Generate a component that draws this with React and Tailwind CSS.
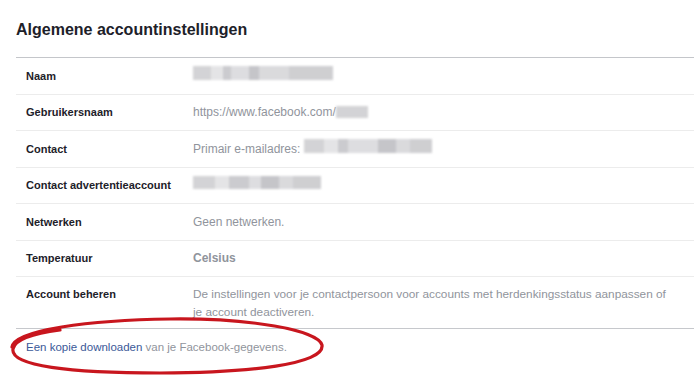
import React from "react";

const ROWS = [
  { label: "Naam", value: <Blur widths={[18, 12, 8, 18, 10, 30, 44]} h={14} /> },
  {
    label: "Gebruikersnaam",
    value: (
      <span className="flex items-center">
        https://www.facebook.com/
        <Blur widths={[32]} h={12} />
      </span>
    ),
  },
  {
    label: "Contact",
    value: (
      <span className="flex items-center">
        Primair e-mailadres:
        <span className="ml-[4px]">
          <Blur widths={[20, 14, 10, 30, 18, 14, 22]} h={14} />
        </span>
      </span>
    ),
  },
  { label: "Contact advertentieaccount", value: <Blur widths={[22, 14, 20, 12, 18, 14, 28]} h={13} /> },
  { label: "Netwerken", value: "Geen netwerken." },
  { label: "Temperatuur", value: <span className="font-bold">Celsius</span> },
];

const SHADES = ["#cfcfd2", "#e2e2e4", "#c6c6ca", "#dadadd", "#bfbfc4", "#d6d6d9", "#cacacd"];

// pixelated privacy blur over the hidden values
function Blur({ widths, h }) {
  return (
    <span className="inline-flex blur-[1.2px] opacity-90" style={{ height: h }}>
      {widths.map((w, i) => (
        <span key={i} className="block h-full" style={{ width: w, background: SHADES[i % SHADES.length] }} />
      ))}
    </span>
  );
}

export default function App() {
  return (
    <div className="relative w-[694px] h-[377px] bg-white overflow-hidden font-['Liberation_Sans',Arial,sans-serif]">
      <h1 className="pl-4 pt-[20px] text-[16px] leading-[20px] font-bold text-[#1d2129]">
        Algemene accountinstellingen
      </h1>

      <div className="ml-4 mt-[17px] border-t border-[#c4c6ca]">
        {ROWS.map(row => (
          <div key={row.label} className="flex items-center h-[36.5px] border-b border-[#ececec]">
            <div className="w-[177px] pl-[10px] shrink-0 text-[11px] font-bold text-[#1d2129]">{row.label}</div>
            <div className="text-[12px] text-[#90949c]">{row.value}</div>
          </div>
        ))}

        {/* Account beheren */}
        <div className="flex items-start pt-[8px] pb-[7px] leading-[18px]">
          <div className="w-[177px] pl-[10px] shrink-0 text-[11px] font-bold text-[#1d2129]">Account beheren</div>
          <div className="text-[11.8px] text-[#90949c]">
            De instellingen voor je contactpersoon voor accounts met herdenkingsstatus aanpassen of
            <br />
            je account deactiveren.
          </div>
        </div>

        <div className="border-t border-[#c6c8cc] pt-[9px] pl-[10px] text-[11.5px] leading-[18px] text-[#90949c]">
          <a className="text-[#3b5998]">Een kopie downloaden</a> van je Facebook-gegevens.
        </div>
      </div>

      {/* hand-drawn red marker circle */}
      <svg className="absolute inset-0 pointer-events-none" width="694" height="377" viewBox="0 0 694 377">
        <path
          d="M12,347 C14,330 90,320 170,319 C250,318 318,330 322,345 C325,364 250,373 160,373 C70,373 10,366 13,349 C15,340 30,334 60,330"
          fill="none"
          stroke="#c8161e"
          strokeWidth="3.2"
          strokeLinecap="round"
        />
      </svg>
    </div>
  );
}
